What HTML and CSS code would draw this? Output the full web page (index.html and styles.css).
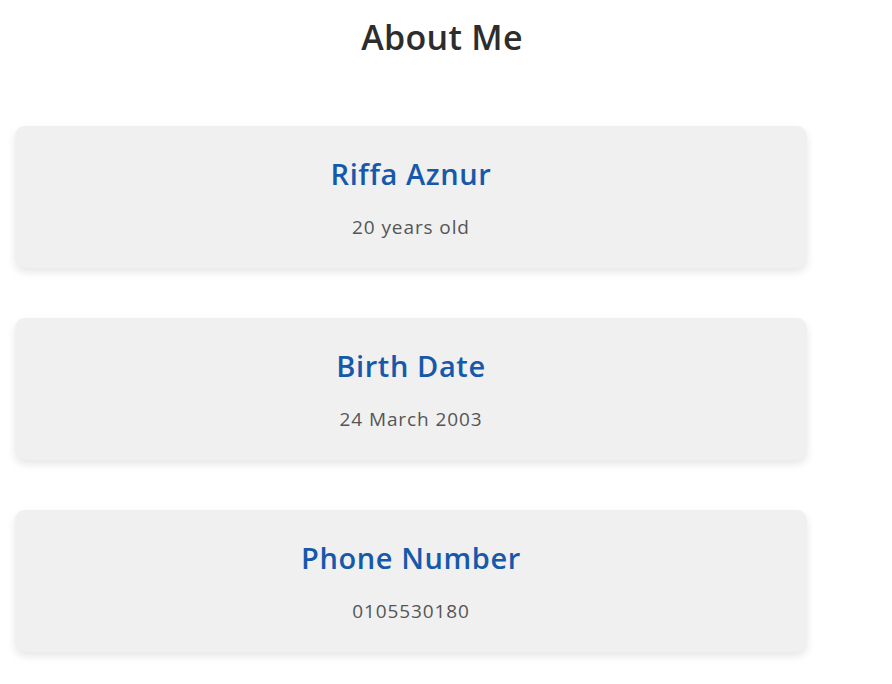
FILE: index.html
```html
<!DOCTYPE html>
<html lang="en">
<head>
<meta charset="utf-8">
<title>About Me</title>
<link rel="stylesheet" href="styles.css">
</head>
<body>
<main class="page">
  <h1 class="page-title">About Me</h1>
  <section class="cards">
    <div class="card">
      <h2 class="card-title">Riffa Aznur</h2>
      <p class="card-text">20 years old</p>
    </div>
    <div class="card">
      <h2 class="card-title">Birth Date</h2>
      <p class="card-text">24 March 2003</p>
    </div>
    <div class="card">
      <h2 class="card-title">Phone Number</h2>
      <p class="card-text">0105530180</p>
    </div>
  </section>
</main>
</body>
</html>
```
FILE: styles.css
```css
* { box-sizing: border-box; }
html, body { margin: 0; padding: 0; background: #ffffff; }
body {
  font-family: "Open Sans", "Liberation Sans", sans-serif;
}
.page {
  padding: 14px 0 30px;
}
.page-title {
  margin: 0 0 66px;
  padding-right: 8px;
  text-align: center;
  font-size: 34px;
  line-height: 46px;
  font-weight: 600;
  letter-spacing: 0.3px;
  color: #2d2d2d;
}
.cards {
  display: flex;
  flex-direction: column;
  gap: 50px;
  width: 792px;
  margin-left: 15px;
}
.card {
  height: 142px;
  background: #f0f0f0;
  border-radius: 10px;
  box-shadow: 0 4px 8px rgba(0, 0, 0, 0.1);
  text-align: center;
  padding-top: 28px;
}
.card-title {
  margin: 0;
  font-size: 29px;
  line-height: 40px;
  font-weight: 600;
  letter-spacing: 0.6px;
  color: #1659aa;
}
.card-text {
  margin: 20px 0 0;
  font-size: 19px;
  line-height: 26px;
  letter-spacing: 0.9px;
  color: #555555;
}
```
